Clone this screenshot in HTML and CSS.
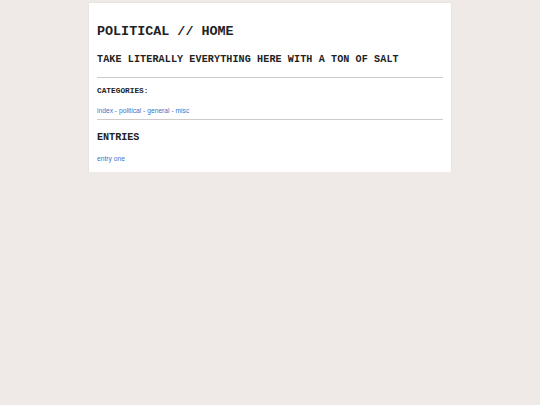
FILE: index.html
```html
<!DOCTYPE html>
<html lang="en">
<head>
  <meta charset="UTF-8" />
  <meta name="viewport" content="width=device-width, initial-scale=1.0"/>
  <title>political // home</title>
  <link rel="stylesheet" href="styles.css">
</head>
<body>
  <div class="page">
    <h1 class="title">POLITICAL // HOME</h1>
    <h2 class="subtitle">TAKE LITERALLY EVERYTHING HERE WITH A TON OF SALT</h2>
    <hr>
    <h3 class="label">CATEGORIES:</h3>
    <p class="links">
      <a href="#">index</a> - <a href="#">political</a> - <a href="#">general</a> - <a href="#">misc</a>
    </p>
    <hr>
    <h2 class="section">ENTRIES</h2>
    <p class="links"><a href="#">entry one</a></p>
  </div>
</body>
</html>
```

FILE: styles.css
```css
/* base */
* {
  margin: 0;
  padding: 0;
  box-sizing: border-box;
}
body {
  background: #efe9e8;
  color: #222;
  font-family: "Courier New", "Liberation Mono", monospace;
}
/* main card */
.page {
  width: 362px;
  margin: 3px auto 0;
  padding: 21px 8px 9px;
  background: #fff;
  box-shadow: 0 0 2px rgba(0,0,0,0.08);
}
.title {
  font-size: 13.4px;
  line-height: 16px;
}
.subtitle {
  font-size: 10.1px;
  line-height: 12px;
  letter-spacing: 0.1px;
  margin-top: 14px;
}
hr {
  border: none;
  border-top: 1px solid #cfcbcb;
  margin-top: 11px;
}
.label {
  font-size: 7.8px;
  line-height: 10px;
  margin-top: 8px;
}
.links {
  font-family: "Liberation Sans", Arial, sans-serif;
  font-size: 6.7px;
  line-height: 9px;
  margin-top: 10px;
  color: #3b74c9;
}
.links + hr {
  margin-top: 4px;
}
.section {
  font-size: 10.1px;
  line-height: 12px;
  margin-top: 12px;
}
.section + .links {
  margin-top: 10px;
}
a {
  color: #3b74c9;
  text-decoration: none;
}
```
